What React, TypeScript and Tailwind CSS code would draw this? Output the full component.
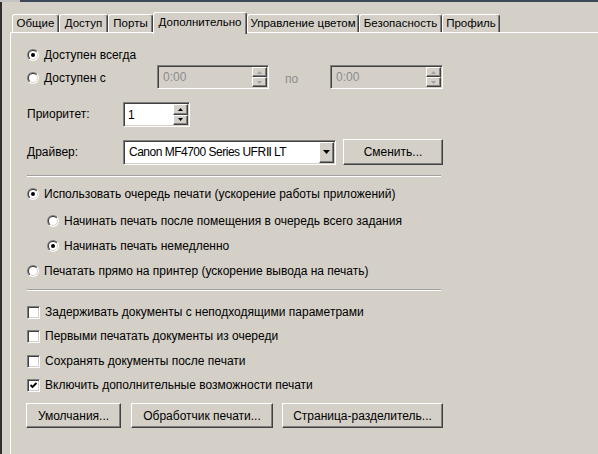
import React from "react";

function Radio({ checked }: { checked?: boolean }) {
  return (
    <svg width="12" height="12" viewBox="0 0 12 12" className="shrink-0">
      <defs>
        <linearGradient id="rgo" x1="0" y1="0" x2="1" y2="1">
          <stop offset="0.5" stopColor="#808080" />
          <stop offset="0.5" stopColor="#ffffff" />
        </linearGradient>
        <linearGradient id="rgi" x1="0" y1="0" x2="1" y2="1">
          <stop offset="0.5" stopColor="#404040" />
          <stop offset="0.5" stopColor="#d4d0c8" />
        </linearGradient>
      </defs>
      <circle cx="6" cy="6" r="6" fill="url(#rgo)" />
      <circle cx="6" cy="6" r="5" fill="url(#rgi)" />
      <circle cx="6" cy="6" r="4" fill="#ffffff" />
      {checked && <circle cx="6" cy="6" r="2" fill="#000000" />}
    </svg>
  );
}

function Check({ checked }: { checked?: boolean }) {
  return (
    <div className="w-[13px] h-[13px] shrink-0 bg-white border border-t-[#808080] border-l-[#808080] border-r-white border-b-white shadow-[inset_1px_1px_0_#404040,inset_-1px_-1px_0_#d4d0c8] flex items-center justify-center">
      {checked && (
        <svg width="9" height="9" viewBox="0 0 9 9">
          <path d="M1.5 4 L3.5 6 L7.5 2" fill="none" stroke="#000" strokeWidth="1.8" />
        </svg>
      )}
    </div>
  );
}

function Arrow({ up, color }: { up?: boolean; color: string }) {
  return (
    <svg width="5" height="3" viewBox="0 0 5 3">
      <path d={up ? "M2.5 0 L5 3 L0 3 Z" : "M0 0 L5 0 L2.5 3 Z"} fill={color} />
    </svg>
  );
}

function Spin({ disabled }: { disabled?: boolean }) {
  const c = disabled ? "#a0a0a0" : "#000000";
  return (
    <div className="w-[15px] h-full flex flex-col shrink-0">
      <div className="flex-1 bg-[#d4d0c8] border border-t-white border-l-white border-r-[#404040] border-b-[#404040] shadow-[inset_-1px_-1px_0_#808080] flex items-center justify-center">
        <Arrow up color={c} />
      </div>
      <div className="flex-1 bg-[#d4d0c8] border border-t-white border-l-white border-r-[#404040] border-b-[#404040] shadow-[inset_-1px_-1px_0_#808080] flex items-center justify-center">
        <Arrow color={c} />
      </div>
    </div>
  );
}

function TimeField({ w }: { w: string }) {
  return (
    <div
      className={`${w} h-[24px] p-[1px] bg-[#d4d0c8] border border-t-[#808080] border-l-[#808080] border-r-white border-b-white shadow-[inset_1px_1px_0_#404040,inset_-1px_-1px_0_#d4d0c8] flex`}
    >
      <div className="flex-1 flex items-center pl-[4px] text-[#8c8c8c]">0:00</div>
      <Spin disabled />
    </div>
  );
}

function Btn({ w, h, children }: { w: string; h: string; children: React.ReactNode }) {
  return (
    <div
      className={`${w} ${h} shrink-0 bg-[#d4d0c8] border border-t-white border-l-white border-r-[#404040] border-b-[#404040] shadow-[inset_-1px_-1px_0_#808080] flex items-center justify-center`}
    >
      {children}
    </div>
  );
}

function RadioRow({ checked, children, cls }: { checked?: boolean; children: React.ReactNode; cls: string }) {
  return (
    <div className={`${cls} h-[20px] flex items-center gap-[5px]`}>
      <Radio checked={checked} />
      <span className="whitespace-nowrap">{children}</span>
    </div>
  );
}

function CheckRow({ checked, children, cls }: { checked?: boolean; children: React.ReactNode; cls: string }) {
  return (
    <div className={`${cls} h-[20px] flex items-center gap-[5px]`}>
      <Check checked={checked} />
      <span className="whitespace-nowrap">{children}</span>
    </div>
  );
}

const tabs = [
  { label: "Общие", w: "w-[47px]" },
  { label: "Доступ", w: "w-[49px]" },
  { label: "Порты", w: "w-[45px]" },
  { label: "Дополнительно", w: "w-[94px]", sel: true },
  { label: "Управление цветом", w: "w-[112px]" },
  { label: "Безопасность", w: "w-[83px]" },
  { label: "Профиль", w: "w-[58px]" },
];

export default function App() {
  return (
    <div className="w-[598px] h-[454px] overflow-hidden bg-[#d4d0c8] flex flex-col font-['Liberation_Sans',Arial,sans-serif] text-[12px] text-black leading-none">
      <div className="h-[2px] flex shrink-0">
        <div className="w-[20px] bg-[#c4c4c4]" />
        <div className="flex-1 bg-[#3d4858]" />
      </div>
      <div className="flex flex-1 min-h-0">
        <div className="w-[2px] bg-[#2e2e2e] shrink-0" />
        <div className="flex-1 flex flex-col pl-[8px] pt-[10px] min-w-0">
          <div className="h-[20px] flex items-end pl-[2px] shrink-0 text-[11.5px]">
            {tabs.map((t) =>
              t.sel ? (
                <div
                  key={t.label}
                  className={`${t.w} h-[22px] mb-[-2px] relative z-10 pb-[2px] bg-[#d4d0c8] border-l border-t border-l-white border-t-white border-r border-r-[#404040] shadow-[inset_-1px_0_0_#808080] rounded-t-[3px] flex items-center justify-center whitespace-nowrap`}
                >
                  {t.label}
                </div>
              ) : (
                <div
                  key={t.label}
                  className={`${t.w} h-[18px] shrink-0 bg-[#d4d0c8] border-l border-t border-l-white border-t-white border-r border-r-[#404040] shadow-[inset_-1px_0_0_#808080] rounded-t-[3px] flex items-center justify-center whitespace-nowrap`}
                >
                  {t.label}
                </div>
              )
            )}
          </div>
          <div className="flex-1 w-[620px] border-l border-t border-white pl-[16px] flex flex-col">
            <RadioRow checked cls="mt-[12px]">Доступен всегда</RadioRow>

            <div className="h-[24px] flex items-center">
              <div className="w-[130px] flex items-center gap-[5px] pt-[2px]">
                <Radio />
                <span>Доступен с</span>
              </div>
              <TimeField w="w-[112px]" />
              <div className="w-[61px] pl-[16px] pt-[3px] text-[#8c8c8c]">по</div>
              <TimeField w="w-[113px]" />
            </div>

            <div className="mt-[13px] h-[25px] flex items-center">
              <div className="w-[96px] pb-[1px]">Приоритет:</div>
              <div className="w-[67px] h-[25px] p-[1px] bg-white border border-t-[#808080] border-l-[#808080] border-r-white border-b-white shadow-[inset_1px_1px_0_#404040,inset_-1px_-1px_0_#d4d0c8] flex">
                <div className="flex-1 flex items-center pl-[3px]">1</div>
                <Spin />
              </div>
            </div>

            <div className="mt-[12px] h-[26px] flex items-center">
              <div className="w-[96px]">Драйвер:</div>
              <div className="w-[213px] h-[25px] p-[1px] bg-white border border-t-[#808080] border-l-[#808080] border-r-white border-b-white shadow-[inset_1px_1px_0_#404040,inset_-1px_-1px_0_#d4d0c8] flex">
                <div className="flex-1 flex items-center pl-[4px] whitespace-nowrap tracking-[-0.5px]">Canon MF4700 Series UFRⅡ LT</div>
                <div className="w-[15px] h-full bg-[#d4d0c8] border border-t-white border-l-white border-r-[#404040] border-b-[#404040] shadow-[inset_-1px_-1px_0_#808080] flex items-center justify-center">
                  <svg width="7" height="4" viewBox="0 0 7 4">
                    <path d="M0 0 L7 0 L3.5 4 Z" fill="#000" />
                  </svg>
                </div>
              </div>
              <div className="ml-[7px]">
                <Btn w="w-[100px]" h="h-[26px]">Сменить...</Btn>
              </div>
            </div>

            <div className="mt-[10px] w-[414px] h-[2px] border-t border-t-[#a0a0a0] border-b border-b-white" />

            <RadioRow checked cls="mt-[7px]">Использовать очередь печати (ускорение работы приложений)</RadioRow>
            <RadioRow cls="mt-[7px] pl-[20px]">Начинать печать после помещения в очередь всего задания</RadioRow>
            <RadioRow checked cls="mt-[5px] pl-[20px]">Начинать печать немедленно</RadioRow>
            <RadioRow cls="mt-[5px]">Печатать прямо на принтер (ускорение вывода на печать)</RadioRow>

            <div className="mt-[8px] w-[414px] h-[2px] border-t border-t-[#a0a0a0] border-b border-b-white" />

            <CheckRow cls="mt-[11px]">Задерживать документы с неподходящими параметрами</CheckRow>
            <CheckRow cls="mt-[4px]">Первыми печатать документы из очереди</CheckRow>
            <CheckRow cls="mt-[5px]">Сохранять документы после печати</CheckRow>
            <CheckRow checked cls="mt-[4px]">Включить дополнительные возможности печати</CheckRow>

            <div className="mt-[8px] ml-[-1px] flex">
              <Btn w="w-[95px]" h="h-[25px]">Умолчания...</Btn>
              <div className="ml-[10px]">
                <Btn w="w-[142px]" h="h-[25px]">Обработчик печати...</Btn>
              </div>
              <div className="ml-[9px]">
                <Btn w="w-[161px]" h="h-[25px]">Страница-разделитель...</Btn>
              </div>
            </div>
          </div>
        </div>
      </div>
    </div>
  );
}
